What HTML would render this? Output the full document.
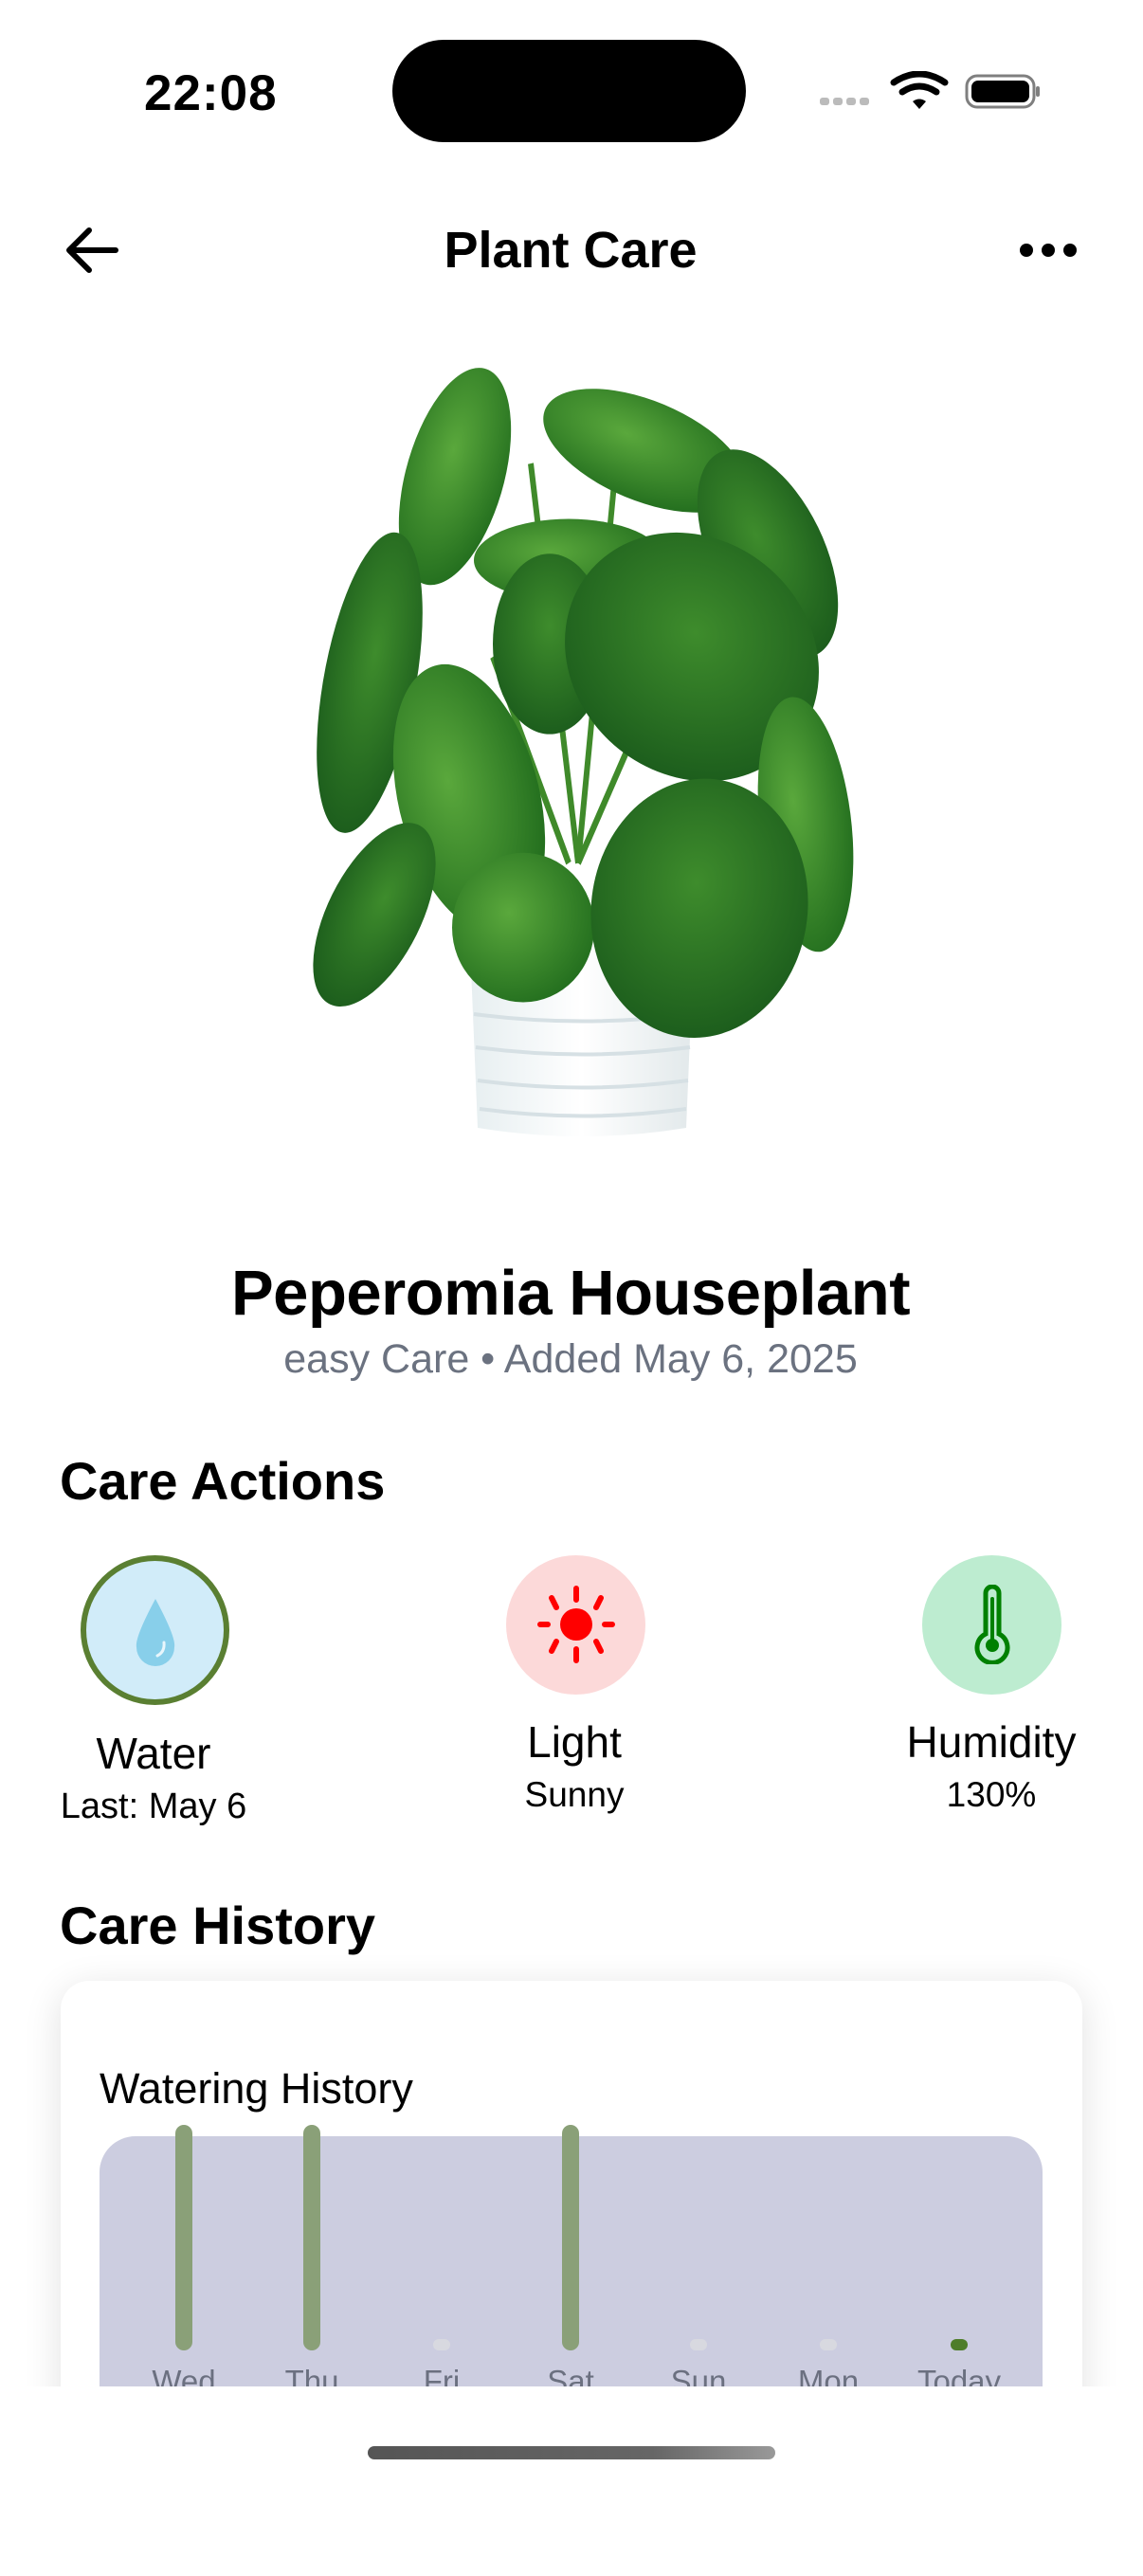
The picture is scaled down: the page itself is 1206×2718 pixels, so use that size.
<!DOCTYPE html>
<html><head><meta charset="utf-8"><style>
html,body{margin:0;padding:0;background:#fff;}
body{width:1206px;height:2622px;position:relative;overflow:hidden;font-family:"Liberation Sans",sans-serif;color:#000;}
.a{position:absolute;}
.c{position:absolute;transform:translateX(-50%);white-space:nowrap;text-align:center;}
</style></head><body>
<!-- status bar -->
<div class="a" style="left:152px;top:68px;font-size:53px;font-weight:600;letter-spacing:1px;">22:08</div>
<div class="a" style="left:414px;top:42px;width:373px;height:108px;background:#000;border-radius:54px;"></div>
<svg class="a" style="left:860px;top:75px" width="240" height="45" viewBox="0 0 240 45">
 <g fill="#bbb"><rect x="5" y="28" width="10" height="8" rx="3"/><rect x="19" y="28" width="10" height="8" rx="3"/><rect x="33" y="28" width="10" height="8" rx="3"/><rect x="47" y="28" width="10" height="8" rx="3"/></g>
 <path d="M83 12 Q110 -6 137 12" stroke="#000" stroke-width="7" fill="none" stroke-linecap="round"/>
 <path d="M92 22 Q110 10 128 22" stroke="#000" stroke-width="7" fill="none" stroke-linecap="round"/>
 <path d="M103 32 L110 40 L117 32 Q110 27 103 32Z" fill="#000"/>
 <rect x="160" y="5" width="71" height="33" rx="11" fill="none" stroke="#000" stroke-width="3" opacity=".5"/>
 <rect x="165" y="10" width="61" height="23" rx="7" fill="#000"/>
 <rect x="233" y="16" width="4" height="11" rx="2" fill="#000" opacity=".5"/>
</svg>
<!-- header -->
<svg class="a" style="left:66px;top:238px" width="62" height="52" viewBox="0 0 62 52"><path d="M56 26 H8 M28 5 L7 26 L28 47" stroke="#000" stroke-width="6" fill="none" stroke-linecap="round" stroke-linejoin="round"/></svg>
<div class="c" style="left:602px;top:233px;font-size:54px;font-weight:bold;">Plant Care</div>
<svg class="a" style="left:1074px;top:253px" width="64" height="22"><circle cx="9" cy="11" r="7"/><circle cx="32" cy="11" r="7"/><circle cx="55" cy="11" r="7"/></svg>
<!-- plant -->
<svg class="a" style="left:0;top:0" width="1206" height="1240" viewBox="0 0 1206 1240">
 <defs>
  <linearGradient id="pot" x1="0" x2="1"><stop offset="0" stop-color="#e6eef0"/><stop offset=".5" stop-color="#fff"/><stop offset="1" stop-color="#e1e8ea"/></linearGradient>
  <radialGradient id="lf" cx=".4" cy=".4" r=".7"><stop offset="0" stop-color="#5aa83c"/><stop offset="1" stop-color="#1f6a1c"/></radialGradient>
  <radialGradient id="lf2" cx=".5" cy=".4" r=".7"><stop offset="0" stop-color="#3e8c2c"/><stop offset="1" stop-color="#17561a"/></radialGradient>
 </defs>
 <path d="M494 950 L734 950 L724 1190 Q615 1208 504 1190 Z" fill="url(#pot)"/>
 <g stroke="#d6e0e4" stroke-width="4" fill="none"><path d="M500 1070 Q615 1085 730 1070"/><path d="M502 1105 Q615 1120 728 1105"/><path d="M504 1140 Q615 1155 726 1140"/><path d="M506 1170 Q615 1185 724 1170"/></g>
 <g transform="translate(0,417) scale(1,1.36) translate(0,-417)">
 <g stroke="#3f8a2a" stroke-width="6" fill="none"><path d="M610 780 L560 470"/><path d="M610 780 L650 470"/><path d="M610 780 L740 560"/><path d="M600 780 L520 620"/></g>
 <ellipse cx="480" cy="480" rx="50" ry="90" transform="rotate(25 480 480)" fill="url(#lf)"/>
 <ellipse cx="680" cy="460" rx="110" ry="40" transform="rotate(15 680 460)" fill="url(#lf)"/>
 <ellipse cx="810" cy="540" rx="55" ry="95" transform="rotate(-40 810 540)" fill="url(#lf2)"/>
 <ellipse cx="600" cy="545" rx="100" ry="32" fill="url(#lf)"/>
 <ellipse cx="390" cy="640" rx="48" ry="120" transform="rotate(15 390 640)" fill="url(#lf2)"/>
 <ellipse cx="580" cy="610" rx="60" ry="70" fill="url(#lf2)"/>
 <ellipse cx="730" cy="620" rx="135" ry="95" transform="rotate(10 730 620)" fill="url(#lf2)"/>
 <ellipse cx="850" cy="750" rx="48" ry="100" transform="rotate(-10 850 750)" fill="url(#lf)"/>
 <ellipse cx="495" cy="730" rx="72" ry="110" transform="rotate(-25 495 730)" fill="url(#lf)"/>
 <ellipse cx="395" cy="820" rx="45" ry="85" transform="rotate(40 395 820)" fill="url(#lf2)"/>
 <ellipse cx="552" cy="830" rx="75" ry="58" fill="url(#lf)"/>
 <ellipse cx="738" cy="815" rx="115" ry="100" transform="rotate(-10 738 815)" fill="url(#lf2)"/>
 </g>
</svg>
<!-- title -->
<div class="c" style="left:602px;top:1326px;font-size:67px;font-weight:bold;letter-spacing:-0.5px;">Peperomia Houseplant</div>
<div class="c" style="left:602px;top:1410px;font-size:43px;color:#6b7280;">easy Care • Added May 6, 2025</div>
<div class="a" style="left:63px;top:1530px;font-size:56px;font-weight:bold;">Care Actions</div>
<!-- actions -->
<div class="a" style="left:85px;top:1641px;width:145px;height:146px;border:6px solid #5a7f32;border-radius:50%;background:#d1ecf9;"></div>
<svg class="a" style="left:138px;top:1683px" width="52" height="75" viewBox="0 0 52 75"><path d="M26 4 Q48 45 46 55 A20 20 0 0 1 6 55 Q4 45 26 4Z" fill="#88cfea"/><path d="M35 50 Q36 60 28 64" stroke="#e8f6fc" stroke-width="3" fill="none" stroke-linecap="round"/></svg>
<div class="c" style="left:162px;top:1823px;font-size:46px;">Water</div>
<div class="c" style="left:162px;top:1885px;font-size:38px;">Last: May 6</div>

<div class="a" style="left:534px;top:1641px;width:147px;height:147px;border-radius:50%;background:#fcd9d9;"></div>
<svg class="a" style="left:566px;top:1672px" width="84" height="84" viewBox="0 0 84 84" fill="#f00">
 <circle cx="42" cy="42" r="17"/>
 <g stroke="#f00" stroke-width="6" stroke-linecap="round"><path d="M42 4V16M42 68V80M4 42H12M72 42H80M16 14L21 24M68 14L63 24M16 70L21 60M68 70L63 60"/></g>
</svg>
<div class="c" style="left:606px;top:1811px;font-size:46px;">Light</div>
<div class="c" style="left:606px;top:1873px;font-size:37px;">Sunny</div>

<div class="a" style="left:973px;top:1641px;width:147px;height:147px;border-radius:50%;background:#bdecd0;"></div>
<svg class="a" style="left:1023px;top:1672px" width="48" height="84" viewBox="0 0 48 84">
 <path d="M17 9 A7 7 0 0 1 31 9 V52 A16 16 0 1 1 17 52Z" fill="none" stroke="#008000" stroke-width="5"/>
 <line x1="24" y1="15" x2="24" y2="60" stroke="#008000" stroke-width="4" stroke-linecap="round"/>
 <circle cx="24" cy="64" r="7" fill="#008000"/>
</svg>
<div class="c" style="left:1046px;top:1811px;font-size:46px;">Humidity</div>
<div class="c" style="left:1046px;top:1873px;font-size:37px;">130%</div>
<!-- history -->
<div class="a" style="left:63px;top:1999px;font-size:56px;font-weight:bold;">Care History</div>
<div class="a" style="left:64px;top:2090px;width:1078px;height:480px;background:#fff;border-radius:30px;box-shadow:0 8px 40px rgba(0,0,0,0.12);"></div>
<div class="a" style="left:105px;top:2178px;font-size:45px;">Watering History</div>
<div class="a" style="left:105px;top:2254px;width:995px;height:300px;background:#cccde0;border-radius:38px 38px 0 0;"></div>
<div class="a" style="left:185px;top:2242px;width:18px;height:238px;border-radius:9px;background:#8aa078;"></div>
<div class="a" style="left:320px;top:2242px;width:18px;height:238px;border-radius:9px;background:#8aa078;"></div>
<div class="a" style="left:593px;top:2242px;width:18px;height:238px;border-radius:9px;background:#8aa078;"></div>
<div class="a" style="left:457px;top:2468px;width:18px;height:12px;border-radius:6px;background:#d8d9e0;"></div>
<div class="a" style="left:728px;top:2468px;width:18px;height:12px;border-radius:6px;background:#d8d9e0;"></div>
<div class="a" style="left:865px;top:2468px;width:18px;height:12px;border-radius:6px;background:#d8d9e0;"></div>
<div class="a" style="left:1003px;top:2468px;width:18px;height:12px;border-radius:6px;background:#4e7d2a;"></div>
<div class="a" style="left:0;top:2494px;width:1206px;height:24px;overflow:hidden;">
 <div class="c" style="left:194px;top:0;font-size:33px;color:#6b7080;">Wed</div>
 <div class="c" style="left:329px;top:0;font-size:33px;color:#6b7080;">Thu</div>
 <div class="c" style="left:466px;top:0;font-size:33px;color:#6b7080;">Fri</div>
 <div class="c" style="left:602px;top:0;font-size:33px;color:#6b7080;">Sat</div>
 <div class="c" style="left:737px;top:0;font-size:33px;color:#6b7080;">Sun</div>
 <div class="c" style="left:874px;top:0;font-size:33px;color:#6b7080;">Mon</div>
 <div class="c" style="left:1012px;top:0;font-size:33px;color:#6b7080;">Today</div>
</div>
<div class="a" style="left:0;top:2518px;width:1206px;height:200px;background:#fff;"></div>
<div class="a" style="left:388px;top:2581px;width:430px;height:14px;border-radius:7px;background:linear-gradient(90deg,#555,#666 70%,#999);"></div>
</body></html>
